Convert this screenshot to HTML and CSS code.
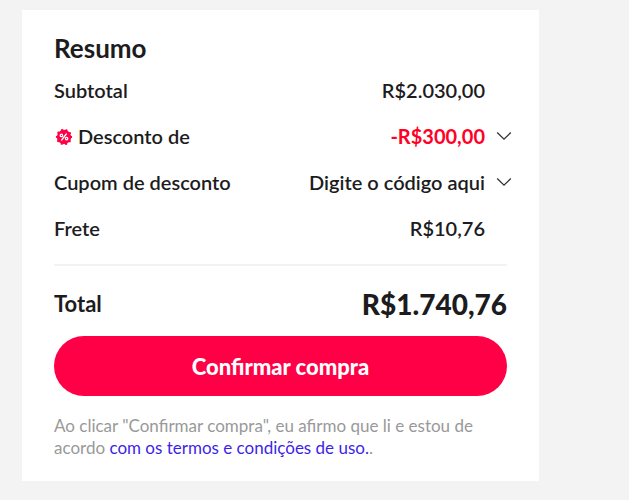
FILE: index.html
```html
<!DOCTYPE html>
<html lang="pt-BR">
<head>
<meta charset="utf-8">
<meta name="viewport" content="width=device-width, initial-scale=1">
<title>Resumo</title>
<link rel="stylesheet" href="styles.css">
</head>
<body>
<main class="summary">
  <h1 class="title">Resumo</h1>
  <dl class="lines">
    <div class="line">
      <dt>Subtotal</dt>
      <dd>R$2.030,00</dd>
    </div>
    <div class="line">
      <dt class="with-badge">
        <svg class="badge" viewBox="0 0 20 20" aria-hidden="true">
          <circle cx="10" cy="11" r="7.2" fill="#ff0046"/>
          <circle cx="10" cy="11" r="7" fill="none" stroke="#ff0046" stroke-width="2.4" stroke-linecap="round" stroke-dasharray="0 4.398"/>
          <g fill="none" stroke="#fff" stroke-width="1.3" stroke-linecap="round">
            <path d="M12.3 8 7.7 14"/>
            <circle cx="7.4" cy="9.4" r="1.2"/>
            <circle cx="12.6" cy="12.6" r="1.2"/>
          </g>
        </svg>
        Desconto de
      </dt>
      <dd class="discount">-R$300,00</dd>
      <dd class="toggle-cell"><button class="toggle" type="button" aria-label="Ver desconto"><svg class="chevron" viewBox="0 0 16 10" aria-hidden="true"><path d="M1.2 1.5 8 8.2l6.8-6.7"/></svg></button></dd>
    </div>
    <div class="line">
      <dt>Cupom de desconto</dt>
      <dd>Digite o código aqui</dd>
      <dd class="toggle-cell"><button class="toggle" type="button" aria-label="Abrir cupom"><svg class="chevron" viewBox="0 0 16 10" aria-hidden="true"><path d="M1.2 1.5 8 8.2l6.8-6.7"/></svg></button></dd>
    </div>
    <div class="line">
      <dt>Frete</dt>
      <dd>R$10,76</dd>
    </div>
  </dl>
  <div class="total">
    <span class="total-label">Total</span>
    <strong class="total-value">R$1.740,76</strong>
  </div>
  <button class="confirm" type="button">Confirmar compra</button>
  <p class="terms">Ao clicar "Confirmar compra", eu afirmo que li e estou de acordo <a href="#termos">com os termos e condições de uso.</a>.</p>
</main>
</body>
</html>
```
FILE: styles.css
```css
* {
  box-sizing: border-box;
}

body {
  margin: 0;
  padding: 10px 90px 19px 22px;
  background: #f3f3f3;
  color: #1c1c1e;
  font-family: Lato, "Open Sans", sans-serif;
}

.summary {
  padding: 22px 32px;
  background: #fff;
}

.title {
  margin: 0 0 3px;
  font-size: 26px;
  font-weight: 700;
  line-height: 32px;
}

.lines {
  margin: 0;
  padding-bottom: 13px;
  border-bottom: 2px solid #f3f3f3;
}

.line {
  display: grid;
  grid-template-columns: 1fr auto 16px;
  column-gap: 11px;
  align-items: center;
  height: 46px;
  margin-right: -5px;
  font-size: 20px;
  font-weight: 600;
}

.line dd {
  margin: 0;
}

.with-badge {
  display: flex;
  align-items: center;
  gap: 4px;
}

.badge {
  width: 20px;
  height: 20px;
}

.line .discount {
  color: #ff0026;
  font-weight: 700;
}

.toggle-cell {
  display: flex;
}

.toggle {
  display: flex;
  padding: 0;
  border: 0;
  background: none;
  cursor: pointer;
}

.chevron {
  width: 16px;
  height: 10px;
  fill: none;
  stroke: #333;
  stroke-width: 1.3;
}

.total {
  display: flex;
  justify-content: space-between;
  align-items: center;
  padding: 22px 0 16px;
  line-height: 32px;
}

.total-label {
  font-size: 22px;
  font-weight: 700;
}

.total-value {
  font-size: 28px;
  font-weight: 900;
}

.confirm {
  display: block;
  width: 100%;
  height: 60px;
  border: 0;
  border-radius: 30px;
  background: #ff0046;
  color: #fff;
  font-family: inherit;
  font-size: 22px;
  font-weight: 900;
  cursor: pointer;
}

.terms {
  margin: 19px 0 0;
  color: #999;
  font-size: 17px;
  line-height: 22px;
}

.terms a {
  color: #3d1fe8;
  text-decoration: none;
}
```
